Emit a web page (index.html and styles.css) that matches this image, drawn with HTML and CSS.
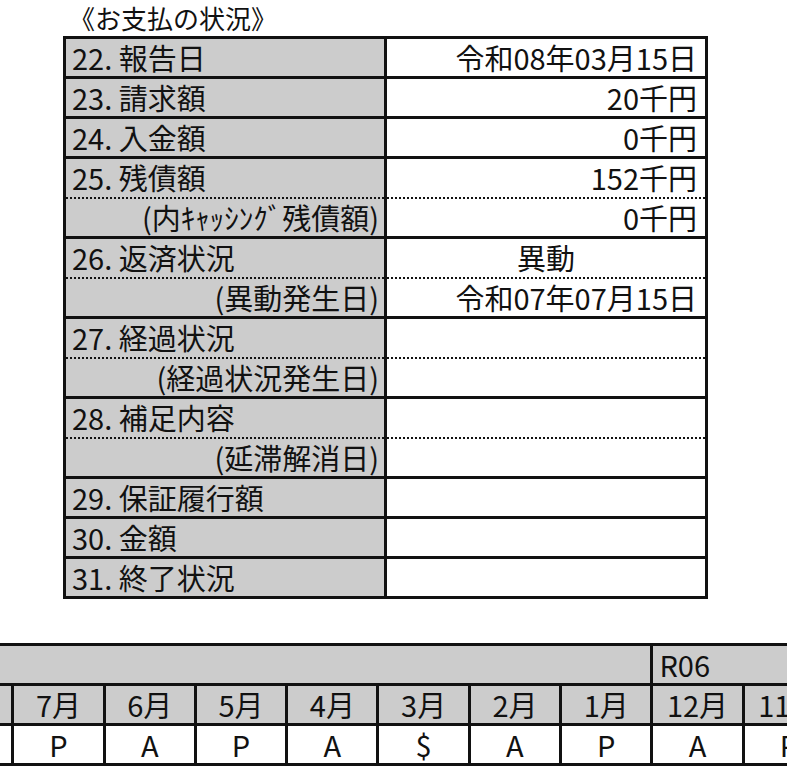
FILE: index.html
```html
<!DOCTYPE html>
<html lang="ja">
<head>
<meta charset="utf-8">
<link rel="stylesheet" href="styles.css">
</head>
<body>
<div class="title">《お支払の状況》</div>
<table class="pay">
  <colgroup><col class="c-label"><col class="c-val"></colgroup>
  <tr><td class="lbl">22. 報告日</td><td class="val r">令和08年03月15日</td></tr>
  <tr><td class="lbl">23. 請求額</td><td class="val r">20千円</td></tr>
  <tr><td class="lbl">24. 入金額</td><td class="val r">0千円</td></tr>
  <tr class="top"><td class="lbl">25. 残債額</td><td class="val r">152千円</td></tr>
  <tr class="sub"><td class="lbl r">(内ｷｬｯｼﾝｸﾞ残債額)</td><td class="val r">0千円</td></tr>
  <tr class="top"><td class="lbl">26. 返済状況</td><td class="val c">異動</td></tr>
  <tr class="sub"><td class="lbl r">(異動発生日)</td><td class="val r">令和07年07月15日</td></tr>
  <tr class="top"><td class="lbl">27. 経過状況</td><td class="val"></td></tr>
  <tr class="sub"><td class="lbl r">(経過状況発生日)</td><td class="val"></td></tr>
  <tr class="top"><td class="lbl">28. 補足内容</td><td class="val"></td></tr>
  <tr class="sub"><td class="lbl r">(延滞解消日)</td><td class="val"></td></tr>
  <tr><td class="lbl">29. 保証履行額</td><td class="val"></td></tr>
  <tr><td class="lbl">30. 金額</td><td class="val"></td></tr>
  <tr><td class="lbl">31. 終了状況</td><td class="val"></td></tr>
</table>

<div class="hist-wrap">
<table class="hist">
  <colgroup>
    <col class="m"><col class="m"><col class="m"><col class="m"><col class="m">
    <col class="m"><col class="m"><col class="m"><col class="m"><col class="m">
  </colgroup>
  <tr><td class="g" colspan="8"></td><td class="g yr" colspan="2">R06</td></tr>
  <tr class="months"><td class="g"></td><td class="g">7月</td><td class="g">6月</td><td class="g">5月</td><td class="g">4月</td><td class="g">3月</td><td class="g">2月</td><td class="g">1月</td><td class="g">12月</td><td class="g">11月</td></tr>
  <tr class="vals"><td></td><td>P</td><td>A</td><td>P</td><td>A</td><td>$</td><td>A</td><td>P</td><td>A</td><td>P</td></tr>
</table>
</div>
</body>
</html>
```

FILE: styles.css
```css
html, body {
  margin: 0;
  padding: 0;
  overflow: hidden;
  background: #fff;
}
body {
  font-family: "Noto Sans CJK JP", "Noto Sans", sans-serif;
  color: #111;
  width: 787px;
  height: 774px;
}
.title {
  height: 36px;
  line-height: 36px;
  font-size: 26px;
  padding-left: 69px;
  box-sizing: border-box;
}
.pay {
  margin-left: 63px;
  border-collapse: collapse;
  table-layout: fixed;
  width: 643px;
  border: 3px solid #111;
}
.c-label { width: 321px; }
.c-val { width: 321px; }
.pay tr { height: 40px; }
.pay td {
  padding: 0;
  font-size: 29px;
  line-height: 1;
  border: 3px solid #111;
  white-space: nowrap;
  vertical-align: middle;
}
.pay .lbl {
  background: #cccccc;
  padding-left: 6px;
}
.pay .val { background: #fff; }
.pay .r { text-align: right; padding-right: 8px; }
.pay .lbl.r { padding-right: 5px; padding-left: 0; }
.pay .c { text-align: center; }
.pay tr.top td { border-bottom: 2px dotted #111; }
.pay tr.sub td { border-top: 2px dotted #111; }

.hist-wrap {
  margin-top: 44px;
  margin-left: -80px;
}
.hist {
  border-collapse: collapse;
  table-layout: fixed;
  width: 913px;
  border-top: 3px solid #111;
  border-bottom: 3px solid #111;
}
.hist .m { width: 91.3px; }
.hist tr { height: 40px; }
.hist td {
  padding: 0;
  font-size: 29px;
  line-height: 1;
  text-align: center;
  border: 3px solid #111;
  white-space: nowrap;
  overflow: hidden;
  vertical-align: middle;
}
.hist td.g { background: #cccccc; }
.hist td.yr {
  text-align: left;
  padding-left: 6px;
}
```
